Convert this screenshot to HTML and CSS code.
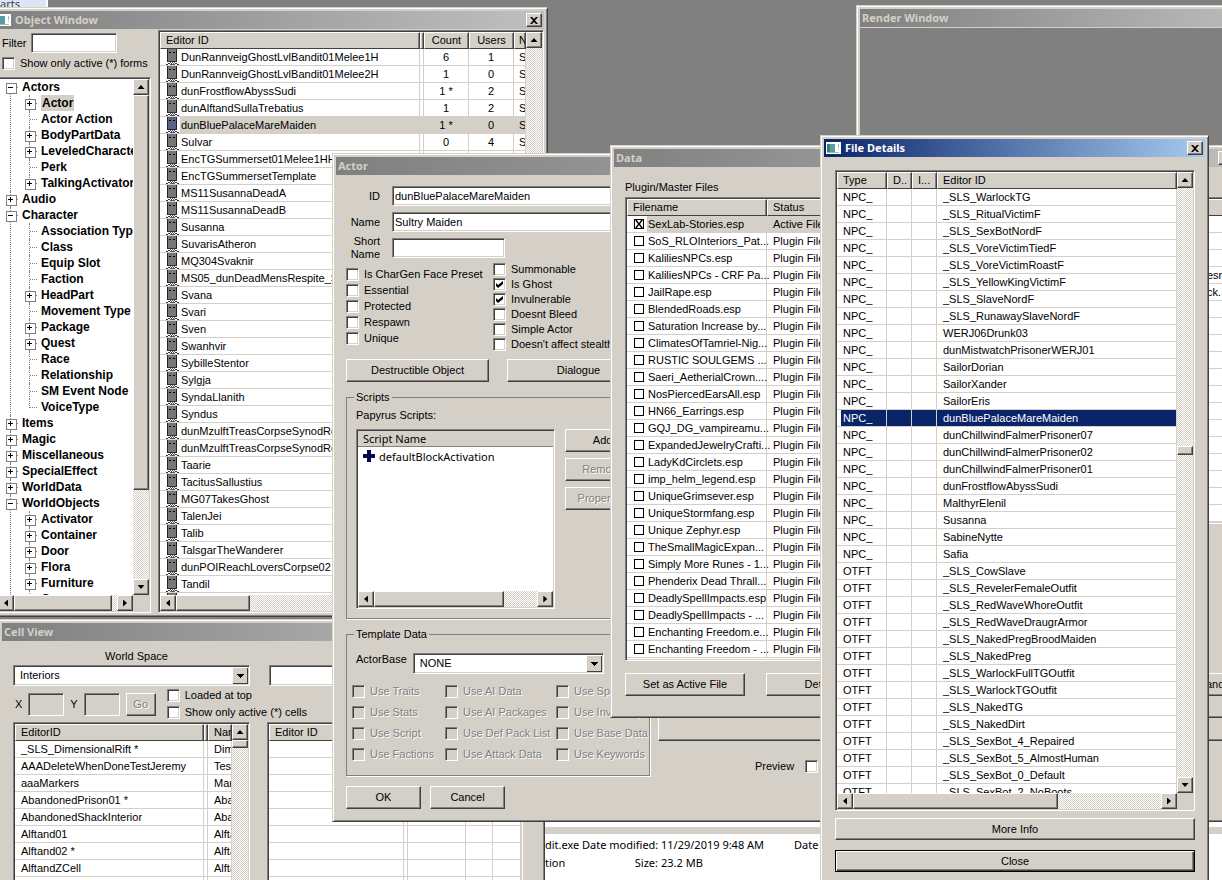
FILE: index.html
```html
<!DOCTYPE html>
<html lang="en">
<head>
    <meta charset="UTF-8">
    <meta name="viewport" content="width=device-width, initial-scale=1.0">
    <title>Creation Kit</title>
    <link rel="stylesheet" href="styles.css">
</head>
<body>
    <svg width="0" height="0" class="defs" aria-hidden="true">
        <symbol id="face" viewBox="0 0 14 16">
            <path d="M1 0h10v13H1z" fill="#777"/>
            <path d="M10 0h1v13h-1zM1 0h1v13H1z" fill="#222"/>
            <path d="M3 3h2v1H3zM7 3h2v1H7z" fill="#000"/>
            <path d="M2 12h9v1H2z" fill="#333"/>
            <path d="M0 15h2v1H0zM2 14h2v1H2zM9 14h2v1H9zM11 15h2v1h-2z" fill="#333"/>
            <path d="M4 13h1v1H4zM6 13h1v1H6zM8 13h1v1H8zM5 14h1v1H5zM7 14h1v1H7zM4 15h5v1H4z" fill="#555"/>
        </symbol>
        <symbol id="face-sel" viewBox="0 0 14 16">
            <path d="M1 0h10v13H1z" fill="#5a6480"/>
            <path d="M10 0h1v13h-1zM1 0h1v13H1z" fill="#1c2440"/>
            <path d="M3 3h2v1H3zM7 3h2v1H7z" fill="#000"/>
            <path d="M2 12h9v1H2z" fill="#223"/>
            <path d="M0 15h2v1H0zM2 14h2v1H2zM9 14h2v1H9zM11 15h2v1h-2z" fill="#334"/>
            <path d="M4 13h1v1H4zM6 13h1v1H6zM8 13h1v1H8zM5 14h1v1H5zM7 14h1v1H7zM4 15h5v1H4z" fill="#446"/>
        </symbol>
        <symbol id="app" viewBox="0 0 16 14">
            <path d="M0 1h15v12H0z" fill="#fff"/>
            <path d="M1 3h8v8H1z" fill="#5f9aa0"/>
            <path d="M1 3h3v8H1z" fill="#3d7d72"/>
            <path d="M12 3h1v4h-1zM12 8h1v1h-1zM1 11h12v1H1z" fill="#9bb"/>
        </symbol>
        <symbol id="cross" viewBox="0 0 8 7">
            <path d="M0 0h2l2 2 2-2h2L5 3.500 8 7H6L4 5 2 7H0l3-3.500z" fill="#000"/>
        </symbol>
    </svg>

    <main class="desktop">
        <div class="taskpane">arts</div>

        <!-- Explorer details pane -->
        <section class="explorer">
            <div class="explorer-bar"></div>
            <dl class="details">
                <dt class="file-name">dit.exe</dt>
                <dt>Date modified:</dt><dd>11/29/2019 9:48 AM</dd><dd>Date created:</dd>
                <dt class="file-kind">tion</dt>
                <dt>Size:</dt><dd>23.2 MB</dd>
            </dl>
        </section>

        <section class="window render-window">
            <header class="title"><h2>Render Window</h2></header>
            <div class="viewport"></div>
        </section>

        <section class="window object-window">
            <header class="title">
                <svg class="app-icon"><use href="#app"/></svg>
                <h2>Object Window</h2>
                <button class="tbtn" aria-label="Close"><svg><use href="#cross"/></svg></button>
            </header>
            <div class="object-body">
                <div class="object-side">
                    <div class="filter">
                        <div class="filter-row"><label for="filter">Filter</label><input type="text" id="filter" class="field"></div>
                        <label class="check"><input type="checkbox">Show only active (*) forms</label>
                    </div>
                    <div class="list tree-list">
                        <div class="list-view">
                            <ul class="tree">
                                <li class="open">Actors
                                    <ul>
                                        <li class="shut"><span class="picked">Actor</span></li>
                                        <li>Actor Action</li>
                                        <li class="shut">BodyPartData</li>
                                        <li class="shut">LeveledCharacter</li>
                                        <li>Perk</li>
                                        <li class="shut">TalkingActivator</li>
                                    </ul>
                                </li>
                                <li class="shut">Audio</li>
                                <li class="open">Character
                                    <ul>
                                        <li>Association Type</li>
                                        <li>Class</li>
                                        <li>Equip Slot</li>
                                        <li>Faction</li>
                                        <li class="shut">HeadPart</li>
                                        <li>Movement Type</li>
                                        <li class="shut">Package</li>
                                        <li class="shut">Quest</li>
                                        <li>Race</li>
                                        <li>Relationship</li>
                                        <li>SM Event Node</li>
                                        <li>VoiceType</li>
                                    </ul>
                                </li>
                                <li class="shut">Items</li>
                                <li class="shut">Magic</li>
                                <li class="shut">Miscellaneous</li>
                                <li class="shut">SpecialEffect</li>
                                <li class="shut">WorldData</li>
                                <li class="open">WorldObjects
                                    <ul>
                                        <li class="shut">Activator</li>
                                        <li class="shut">Container</li>
                                        <li class="shut">Door</li>
                                        <li class="shut">Flora</li>
                                        <li class="shut">Furniture</li>
                                        <li class="shut">Grass</li>
                                    </ul>
                                </li>
                            </ul>
                        </div>
                        <div class="vbar"><button class="arrow up" aria-label="Up"></button><div class="thumb tree-v"></div><button class="arrow down" aria-label="Down"></button></div>
                        <div class="hbar"><button class="arrow left" aria-label="Left"></button><div class="thumb tree-h"></div><button class="arrow right" aria-label="Right"></button></div>
                    </div>
                </div>
                <div class="list object-list">
                    <div class="list-view">
                        <table class="object-table">
                            <colgroup><col class="w-id"><col class="w-gap"><col class="w-num"><col class="w-num"><col></colgroup>
                            <thead><tr><th>Editor ID</th><th></th><th class="num">Count</th><th class="num">Users</th><th>Name</th></tr></thead>
                            <tbody>
                                <tr><td><svg><use href="#face"/></svg>DunRannveigGhostLvlBandit01Melee1H</td><td></td><td>6</td><td>1</td><td>S</td></tr>
                                <tr><td><svg><use href="#face"/></svg>DunRannveigGhostLvlBandit01Melee2H</td><td></td><td>1</td><td>0</td><td>S</td></tr>
                                <tr><td><svg><use href="#face"/></svg>dunFrostflowAbyssSudi</td><td></td><td>1 *</td><td>2</td><td>S</td></tr>
                                <tr><td><svg><use href="#face"/></svg>dunAlftandSullaTrebatius</td><td></td><td>1</td><td>2</td><td>S</td></tr>
                                <tr class="soft"><td><svg><use href="#face-sel"/></svg>dunBluePalaceMareMaiden</td><td></td><td>1 *</td><td>0</td><td>S</td></tr>
                                <tr><td><svg><use href="#face"/></svg>Sulvar</td><td></td><td>0</td><td>4</td><td>S</td></tr>
                                <tr><td><svg><use href="#face"/></svg>EncTGSummerset01Melee1HHighElfM</td><td></td><td></td><td></td><td></td></tr>
                                <tr><td><svg><use href="#face"/></svg>EncTGSummersetTemplate</td><td></td><td></td><td></td><td></td></tr>
                                <tr><td><svg><use href="#face"/></svg>MS11SusannaDeadA</td><td></td><td></td><td></td><td></td></tr>
                                <tr><td><svg><use href="#face"/></svg>MS11SusannaDeadB</td><td></td><td></td><td></td><td></td></tr>
                                <tr><td><svg><use href="#face"/></svg>Susanna</td><td></td><td></td><td></td><td></td></tr>
                                <tr><td><svg><use href="#face"/></svg>SuvarisAtheron</td><td></td><td></td><td></td><td></td></tr>
                                <tr><td><svg><use href="#face"/></svg>MQ304Svaknir</td><td></td><td></td><td></td><td></td></tr>
                                <tr><td><svg><use href="#face"/></svg>MS05_dunDeadMensRespite_Svaknir</td><td></td><td></td><td></td><td></td></tr>
                                <tr><td><svg><use href="#face"/></svg>Svana</td><td></td><td></td><td></td><td></td></tr>
                                <tr><td><svg><use href="#face"/></svg>Svari</td><td></td><td></td><td></td><td></td></tr>
                                <tr><td><svg><use href="#face"/></svg>Sven</td><td></td><td></td><td></td><td></td></tr>
                                <tr><td><svg><use href="#face"/></svg>Swanhvir</td><td></td><td></td><td></td><td></td></tr>
                                <tr><td><svg><use href="#face"/></svg>SybilleStentor</td><td></td><td></td><td></td><td></td></tr>
                                <tr><td><svg><use href="#face"/></svg>Sylgja</td><td></td><td></td><td></td><td></td></tr>
                                <tr><td><svg><use href="#face"/></svg>SyndaLlanith</td><td></td><td></td><td></td><td></td></tr>
                                <tr><td><svg><use href="#face"/></svg>Syndus</td><td></td><td></td><td></td><td></td></tr>
                                <tr><td><svg><use href="#face"/></svg>dunMzulftTreasCorpseSynodResearcher</td><td></td><td></td><td></td><td></td></tr>
                                <tr><td><svg><use href="#face"/></svg>dunMzulftTreasCorpseSynodResearcher</td><td></td><td></td><td></td><td></td></tr>
                                <tr><td><svg><use href="#face"/></svg>Taarie</td><td></td><td></td><td></td><td></td></tr>
                                <tr><td><svg><use href="#face"/></svg>TacitusSallustius</td><td></td><td></td><td></td><td></td></tr>
                                <tr><td><svg><use href="#face"/></svg>MG07TakesGhost</td><td></td><td></td><td></td><td></td></tr>
                                <tr><td><svg><use href="#face"/></svg>TalenJei</td><td></td><td></td><td></td><td></td></tr>
                                <tr><td><svg><use href="#face"/></svg>Talib</td><td></td><td></td><td></td><td></td></tr>
                                <tr><td><svg><use href="#face"/></svg>TalsgarTheWanderer</td><td></td><td></td><td></td><td></td></tr>
                                <tr><td><svg><use href="#face"/></svg>dunPOIReachLoversCorpse02</td><td></td><td></td><td></td><td></td></tr>
                                <tr><td><svg><use href="#face"/></svg>Tandil</td><td></td><td></td><td></td><td></td></tr>
                                <tr><td><svg><use href="#face"/></svg></td><td></td><td></td><td></td><td></td></tr>
                            </tbody>
                        </table>
                    </div>
                    <div class="vbar"><button class="arrow up" aria-label="Up"></button><span class="fill"></span><button class="arrow down" aria-label="Down"></button></div>
                    <div class="hbar"><button class="arrow left" aria-label="Left"></button><div class="thumb object-h"></div><button class="arrow right" aria-label="Right"></button></div>
                </div>
            </div>
        </section>

        <section class="window cell-window">
            <header class="title"><h2>Cell View</h2></header>
            <div class="cell-body">
                <div class="cell-left">
                    <label class="world-label" for="world">World Space</label>
                    <select id="world" class="combo"><option>Interiors</option></select>
                    <div class="coords">
                        <label for="cx">X</label><input type="text" id="cx" class="field" disabled>
                        <label for="cy">Y</label><input type="text" id="cy" class="field" disabled>
                        <button class="btn go" disabled>Go</button>
                        <div class="coord-checks">
                            <label class="check"><input type="checkbox">Loaded at top</label>
                            <label class="check"><input type="checkbox">Show only active (*) cells</label>
                        </div>
                    </div>
                    <div class="list cell-list">
                        <div class="list-view">
                            <table class="cell-table">
                                <colgroup><col class="w-cell"><col class="w-gap"><col></colgroup>
                                <thead><tr><th>EditorID</th><th></th><th>Name</th></tr></thead>
                                <tbody>
                                    <tr><td>_SLS_DimensionalRift *</td><td></td><td>Dim</td></tr>
                                    <tr><td>AAADeleteWhenDoneTestJeremy</td><td></td><td>Test</td></tr>
                                    <tr><td>aaaMarkers</td><td></td><td>Mark</td></tr>
                                    <tr><td>AbandonedPrison01 *</td><td></td><td>Aban</td></tr>
                                    <tr><td>AbandonedShackInterior</td><td></td><td>Aban</td></tr>
                                    <tr><td>Alftand01</td><td></td><td>Alftan</td></tr>
                                    <tr><td>Alftand02 *</td><td></td><td>Alftan</td></tr>
                                    <tr><td>AlftandZCell</td><td></td><td>Alftan</td></tr>
                                    <tr><td></td><td></td><td></td></tr>
                                </tbody>
                            </table>
                        </div>
                        <div class="vbar"><button class="arrow up" aria-label="Up"></button><div class="thumb small"></div></div>
                    </div>
                </div>
                <div class="cell-right">
                    <input type="text" class="field cell-filter" aria-label="Cell filter">
                    <div class="list ref-list">
                        <div class="list-view">
                            <table class="ref-table">
                                <colgroup><col class="w-ref"><col class="w-gap"><col class="w-form"><col class="w-type"><col></colgroup>
                                <thead><tr><th>Editor ID</th><th></th><th></th><th></th><th></th></tr></thead>
                                <tbody>
                                    <tr><td></td><td></td><td></td><td></td><td></td></tr>
                                    <tr><td></td><td></td><td></td><td></td><td></td></tr>
                                    <tr><td></td><td></td><td></td><td></td><td></td></tr>
                                    <tr><td></td><td></td><td></td><td></td><td></td></tr>
                                    <tr><td></td><td></td><td></td><td></td><td></td></tr>
                                    <tr><td></td><td></td><td></td><td></td><td></td></tr>
                                    <tr><td></td><td></td><td></td><td></td><td></td></tr>
                                    <tr><td></td><td></td><td></td><td></td><td></td></tr>
                                    <tr><td></td><td></td><td></td><td></td><td></td></tr>
                                </tbody>
                            </table>
                        </div>
                    </div>
                </div>
            </div>
        </section>

        <section class="window actor-window">
            <header class="title"><h2>Actor</h2></header>
            <div class="actor-body">
                <div class="actor-main">
                    <div class="names">
                        <label for="aid">ID</label><input type="text" id="aid" class="field" value="dunBluePalaceMareMaiden">
                        <label for="aname">Name</label><input type="text" id="aname" class="field" value="Sultry Maiden">
                        <label for="ashort">Short Name</label><input type="text" id="ashort" class="field short">
                    </div>
                    <div class="flags">
                        <div class="flags-left">
                            <label class="check"><input type="checkbox">Is CharGen Face Preset</label>
                            <label class="check"><input type="checkbox">Essential</label>
                            <label class="check"><input type="checkbox">Protected</label>
                            <label class="check"><input type="checkbox">Respawn</label>
                            <label class="check"><input type="checkbox">Unique</label>
                        </div>
                        <div class="flags-right">
                            <label class="check"><input type="checkbox">Summonable</label>
                            <label class="check"><input type="checkbox" checked>Is Ghost</label>
                            <label class="check"><input type="checkbox" checked>Invulnerable</label>
                            <label class="check"><input type="checkbox">Doesnt Bleed</label>
                            <label class="check"><input type="checkbox">Simple Actor</label>
                            <label class="check"><input type="checkbox">Doesn't affect stealth</label>
                        </div>
                    </div>
                    <div class="two-buttons">
                        <button class="btn">Destructible Object</button>
                        <button class="btn">Dialogue</button>
                    </div>
                    <fieldset class="scripts">
                        <legend>Scripts</legend>
                        <div class="caption">Papyrus Scripts:</div>
                        <div class="scripts-row">
                            <div class="list script-list">
                                <div class="list-view">
                                    <div class="script-head">Script Name</div>
                                    <div class="script-item"><svg viewBox="0 0 12 12"><path d="M4 0h4v4h4v4H8v4H4V8H0V4h4z" fill="#0a0a50"/></svg>defaultBlockActivation</div>
                                </div>
                                <div class="hbar"><button class="arrow left" aria-label="Left"></button><div class="thumb script-h"></div><button class="arrow right" aria-label="Right"></button></div>
                            </div>
                            <div class="script-buttons">
                                <button class="btn">Add</button>
                                <button class="btn" disabled>Remove</button>
                                <button class="btn" disabled>Properties</button>
                            </div>
                        </div>
                    </fieldset>
                    <fieldset class="template">
                        <legend>Template Data</legend>
                        <div class="base-row">
                            <label for="base">ActorBase</label>
                            <select id="base" class="combo"><option>NONE</option></select>
                            <button class="btn" aria-label="Edit"></button>
                        </div>
                        <div class="uses">
                            <label class="check off"><input type="checkbox" disabled>Use Traits</label>
                            <label class="check off"><input type="checkbox" disabled>Use AI Data</label>
                            <label class="check off"><input type="checkbox" disabled>Use Spell List</label>
                            <label class="check off"><input type="checkbox" disabled>Use Stats</label>
                            <label class="check off"><input type="checkbox" disabled>Use AI Packages</label>
                            <label class="check off"><input type="checkbox" disabled>Use Inventory</label>
                            <label class="check off"><input type="checkbox" disabled>Use Script</label>
                            <label class="check off"><input type="checkbox" disabled>Use Def Pack List</label>
                            <label class="check off"><input type="checkbox" disabled>Use Base Data</label>
                            <label class="check off"><input type="checkbox" disabled>Use Factions</label>
                            <label class="check off"><input type="checkbox" disabled>Use Attack Data</label>
                            <label class="check off"><input type="checkbox" disabled>Use Keywords</label>
                        </div>
                    </fieldset>
                    <div class="ok-row">
                        <button class="btn">OK</button>
                        <button class="btn">Cancel</button>
                    </div>
                </div>
                <div class="actor-side">
                    <div class="tab-panel"></div>
                    <div class="preview"><label for="preview">Preview</label><input type="checkbox" id="preview"></div>
                </div>
            </div>
        </section>

        <section class="window data-window">
            <header class="title">
                <h2>Data</h2>
                <button class="tbtn" aria-label="Minimize"><span class="min"></span></button>
                <button class="tbtn" aria-label="Maximize"></button>
                <button class="tbtn" aria-label="Close"></button>
            </header>
            <div class="data-body">
                <div class="caption">Plugin/Master Files</div>
                <div class="data-lists">
                    <div class="list file-list">
                        <div class="list-view">
                            <table class="file-table">
                                <colgroup><col class="w-file"><col></colgroup>
                                <thead><tr><th>Filename</th><th>Status</th></tr></thead>
                                <tbody>
                                    <tr class="soft"><td><label><input type="checkbox" checked>SexLab-Stories.esp</label></td><td>Active File</td></tr>
                                    <tr><td><label><input type="checkbox">SoS_RLOInteriors_Pat...</label></td><td>Plugin File</td></tr>
                                    <tr><td><label><input type="checkbox">KaliliesNPCs.esp</label></td><td>Plugin File</td></tr>
                                    <tr><td><label><input type="checkbox">KaliliesNPCs - CRF Pa...</label></td><td>Plugin File</td></tr>
                                    <tr><td><label><input type="checkbox">JailRape.esp</label></td><td>Plugin File</td></tr>
                                    <tr><td><label><input type="checkbox">BlendedRoads.esp</label></td><td>Plugin File</td></tr>
                                    <tr><td><label><input type="checkbox">Saturation Increase by...</label></td><td>Plugin File</td></tr>
                                    <tr><td><label><input type="checkbox">ClimatesOfTamriel-Nig...</label></td><td>Plugin File</td></tr>
                                    <tr><td><label><input type="checkbox">RUSTIC SOULGEMS ...</label></td><td>Plugin File</td></tr>
                                    <tr><td><label><input type="checkbox">Saeri_AetherialCrown....</label></td><td>Plugin File</td></tr>
                                    <tr><td><label><input type="checkbox">NosPiercedEarsAll.esp</label></td><td>Plugin File</td></tr>
                                    <tr><td><label><input type="checkbox">HN66_Earrings.esp</label></td><td>Plugin File</td></tr>
                                    <tr><td><label><input type="checkbox">GQJ_DG_vampireamu...</label></td><td>Plugin File</td></tr>
                                    <tr><td><label><input type="checkbox">ExpandedJewelryCrafti...</label></td><td>Plugin File</td></tr>
                                    <tr><td><label><input type="checkbox">LadyKdCirclets.esp</label></td><td>Plugin File</td></tr>
                                    <tr><td><label><input type="checkbox">imp_helm_legend.esp</label></td><td>Plugin File</td></tr>
                                    <tr><td><label><input type="checkbox">UniqueGrimsever.esp</label></td><td>Plugin File</td></tr>
                                    <tr><td><label><input type="checkbox">UniqueStormfang.esp</label></td><td>Plugin File</td></tr>
                                    <tr><td><label><input type="checkbox">Unique Zephyr.esp</label></td><td>Plugin File</td></tr>
                                    <tr><td><label><input type="checkbox">TheSmallMagicExpan...</label></td><td>Plugin File</td></tr>
                                    <tr><td><label><input type="checkbox">Simply More Runes - 1...</label></td><td>Plugin File</td></tr>
                                    <tr><td><label><input type="checkbox">Phenderix Dead Thrall...</label></td><td>Plugin File</td></tr>
                                    <tr><td><label><input type="checkbox">DeadlySpellImpacts.esp</label></td><td>Plugin File</td></tr>
                                    <tr><td><label><input type="checkbox">DeadlySpellImpacts - ...</label></td><td>Plugin File</td></tr>
                                    <tr><td><label><input type="checkbox">Enchanting Freedom.e...</label></td><td>Plugin File</td></tr>
                                    <tr><td><label><input type="checkbox">Enchanting Freedom - ...</label></td><td>Plugin File</td></tr>
                                </tbody>
                            </table>
                        </div>
                    </div>
                    <div class="list info-list">
                        <div class="list-view">
                            <table class="info-table">
                                <colgroup><col class="w-info"><col></colgroup>
                                <thead><tr><th></th><th></th></tr></thead>
                                <tbody>
                                    <tr><td></td><td></td></tr><tr><td></td><td></td></tr><tr><td></td><td></td></tr>
                                    <tr><td></td><td>esn't</td></tr><tr><td></td><td>ck.</td></tr>
                                    <tr><td></td><td></td></tr><tr><td></td><td></td></tr><tr><td></td><td></td></tr>
                                    <tr><td></td><td></td></tr><tr><td></td><td></td></tr><tr><td></td><td></td></tr>
                                    <tr><td></td><td></td></tr><tr><td></td><td></td></tr><tr><td></td><td></td></tr>
                                    <tr><td></td><td></td></tr><tr><td></td><td></td></tr><tr><td></td><td></td></tr>
                                    <tr><td></td><td></td></tr>
                                </tbody>
                            </table>
                        </div>
                    </div>
                </div>
                <div class="data-buttons">
                    <button class="btn">Set as Active File</button>
                    <button class="btn">Details...</button>
                    <button class="btn last">and</button>
                </div>
            </div>
        </section>

        <section class="window details-window">
            <header class="title active">
                <svg class="app-icon"><use href="#app"/></svg>
                <h2>File Details</h2>
                <button class="tbtn" aria-label="Close"><svg><use href="#cross"/></svg></button>
            </header>
            <div class="details-body">
                <div class="list form-list">
                    <div class="list-view">
                        <table class="form-table">
                            <colgroup><col class="w-kind"><col class="w-mark"><col class="w-mark"><col></colgroup>
                            <thead><tr><th>Type</th><th>D..</th><th>I...</th><th>Editor ID</th></tr></thead>
                            <tbody>
                                <tr><td>NPC_</td><td></td><td></td><td>_SLS_WarlockTG</td></tr>
                                <tr><td>NPC_</td><td></td><td></td><td>_SLS_RitualVictimF</td></tr>
                                <tr><td>NPC_</td><td></td><td></td><td>_SLS_SexBotNordF</td></tr>
                                <tr><td>NPC_</td><td></td><td></td><td>_SLS_VoreVictimTiedF</td></tr>
                                <tr><td>NPC_</td><td></td><td></td><td>_SLS_VoreVictimRoastF</td></tr>
                                <tr><td>NPC_</td><td></td><td></td><td>_SLS_YellowKingVictimF</td></tr>
                                <tr><td>NPC_</td><td></td><td></td><td>_SLS_SlaveNordF</td></tr>
                                <tr><td>NPC_</td><td></td><td></td><td>_SLS_RunawaySlaveNordF</td></tr>
                                <tr><td>NPC_</td><td></td><td></td><td>WERJ06Drunk03</td></tr>
                                <tr><td>NPC_</td><td></td><td></td><td>dunMistwatchPrisonerWERJ01</td></tr>
                                <tr><td>NPC_</td><td></td><td></td><td>SailorDorian</td></tr>
                                <tr><td>NPC_</td><td></td><td></td><td>SailorXander</td></tr>
                                <tr><td>NPC_</td><td></td><td></td><td>SailorEris</td></tr>
                                <tr class="hot"><td>NPC_</td><td></td><td></td><td>dunBluePalaceMareMaiden</td></tr>
                                <tr><td>NPC_</td><td></td><td></td><td>dunChillwindFalmerPrisoner07</td></tr>
                                <tr><td>NPC_</td><td></td><td></td><td>dunChillwindFalmerPrisoner02</td></tr>
                                <tr><td>NPC_</td><td></td><td></td><td>dunChillwindFalmerPrisoner01</td></tr>
                                <tr><td>NPC_</td><td></td><td></td><td>dunFrostflowAbyssSudi</td></tr>
                                <tr><td>NPC_</td><td></td><td></td><td>MalthyrElenil</td></tr>
                                <tr><td>NPC_</td><td></td><td></td><td>Susanna</td></tr>
                                <tr><td>NPC_</td><td></td><td></td><td>SabineNytte</td></tr>
                                <tr><td>NPC_</td><td></td><td></td><td>Safia</td></tr>
                                <tr><td>OTFT</td><td></td><td></td><td>_SLS_CowSlave</td></tr>
                                <tr><td>OTFT</td><td></td><td></td><td>_SLS_RevelerFemaleOutfit</td></tr>
                                <tr><td>OTFT</td><td></td><td></td><td>_SLS_RedWaveWhoreOutfit</td></tr>
                                <tr><td>OTFT</td><td></td><td></td><td>_SLS_RedWaveDraugrArmor</td></tr>
                                <tr><td>OTFT</td><td></td><td></td><td>_SLS_NakedPregBroodMaiden</td></tr>
                                <tr><td>OTFT</td><td></td><td></td><td>_SLS_NakedPreg</td></tr>
                                <tr><td>OTFT</td><td></td><td></td><td>_SLS_WarlockFullTGOutfit</td></tr>
                                <tr><td>OTFT</td><td></td><td></td><td>_SLS_WarlockTGOutfit</td></tr>
                                <tr><td>OTFT</td><td></td><td></td><td>_SLS_NakedTG</td></tr>
                                <tr><td>OTFT</td><td></td><td></td><td>_SLS_NakedDirt</td></tr>
                                <tr><td>OTFT</td><td></td><td></td><td>_SLS_SexBot_4_Repaired</td></tr>
                                <tr><td>OTFT</td><td></td><td></td><td>_SLS_SexBot_5_AlmostHuman</td></tr>
                                <tr><td>OTFT</td><td></td><td></td><td>_SLS_SexBot_0_Default</td></tr>
                                <tr><td>OTFT</td><td></td><td></td><td>_SLS_SexBot_2_NoBoots</td></tr>
                            </tbody>
                        </table>
                    </div>
                    <div class="vbar"><button class="arrow up" aria-label="Up"></button><div class="thumb form-v"></div><button class="arrow down" aria-label="Down"></button></div>
                    <div class="hbar"><button class="arrow left" aria-label="Left"></button><div class="thumb form-h"></div><button class="arrow right" aria-label="Right"></button></div>
                </div>
                <button class="btn">More Info</button>
                <button class="btn default">Close</button>
            </div>
        </section>
    </main>
</body>
</html>
```

FILE: styles.css
```css
* {
    box-sizing: border-box;
}
body {
    margin: 0;
    background: #808080;
    font-family: "Liberation Sans", Arial, sans-serif;
    font-size: 11px;
    line-height: 13px;
    color: #000;
}
button, input, select {
    font: inherit;
    color: inherit;
    margin: 0;
    border-radius: 0;
}
.defs {
    position: absolute;
}
.desktop {
    position: relative;
    height: 100vh;
    overflow: hidden;
    background: #808080;
}
.taskpane {
    width: 48px;
    height: 7px;
    overflow: hidden;
    background: #dce6f4;
    border-right: 2px solid #fff;
    font-family: "Noto Sans", sans-serif;
    line-height: 8px;
    color: #345;
}

/* windows */
.window {
    position: absolute;
    display: flex;
    flex-direction: column;
    padding: 3px;
    background: #d4d0c8;
    border: 1px solid;
    border-color: #d4d0c8 #404040 #404040 #d4d0c8;
    box-shadow: inset 1px 1px #fff, inset -1px -1px #808080;
}
.title {
    display: flex;
    flex: none;
    align-items: center;
    height: 18px;
    padding: 0 2px;
    background: linear-gradient(to right, #808080, #c0c0c0);
    color: #d4d0c8;
}
.title.active {
    background: linear-gradient(to right, #0a246a, #a6caf0);
    color: #fff;
}
.title h2 {
    flex: 1;
    margin: 0;
    font-family: "Noto Sans", Tahoma, sans-serif;
    font-size: 11px;
    line-height: 18px;
    font-weight: bold;
}
.app-icon {
    width: 16px;
    height: 14px;
    margin-right: 3px;
}
.tbtn {
    display: flex;
    align-items: center;
    justify-content: center;
    width: 16px;
    height: 14px;
    padding: 0;
    background: #d4d0c8;
    border: 1px solid;
    border-color: #fff #404040 #404040 #fff;
    box-shadow: inset -1px -1px #808080;
}
.tbtn svg {
    width: 8px;
    height: 7px;
}
.min {
    width: 6px;
    height: 2px;
    margin: 6px 2px 0 0;
    background: #000;
}

/* controls */
.btn {
    height: 23px;
    padding: 0;
    background: #d4d0c8;
    border: 1px solid;
    border-color: #fff #404040 #404040 #fff;
    box-shadow: inset -1px -1px #808080;
    text-align: center;
    white-space: nowrap;
}
.btn:disabled, .check.off {
    color: #808080;
    text-shadow: 1px 1px #fff;
}
.btn.default {
    border-color: #000;
    box-shadow: inset 1px 1px #fff, inset -1px -1px #404040, inset -2px -2px #808080;
}
.field, .combo {
    height: 20px;
    padding: 0 4px;
    background: #fff;
    border: 1px solid;
    border-color: #808080 #fff #fff #808080;
    box-shadow: inset 1px 1px #404040, inset -1px -1px #d4d0c8;
    outline: none;
}
.field:disabled {
    background: #d4d0c8;
}
.combo {
    appearance: none;
    height: 21px;
    padding: 0 6px;
    background-color: #fff;
    background-image:
        linear-gradient(to right, #000, #000),
        linear-gradient(to right, #000, #000),
        linear-gradient(to right, #000, #000),
        linear-gradient(to right, #000, #000),
        linear-gradient(to right, #fff, #fff),
        linear-gradient(to right, #fff, #fff),
        linear-gradient(to right, #404040, #404040),
        linear-gradient(to right, #404040, #404040),
        linear-gradient(to right, #d4d0c8, #d4d0c8);
    background-size: 7px 1px, 5px 1px, 3px 1px, 1px 1px, 16px 1px, 1px 17px, 16px 1px, 1px 17px, 16px 17px;
    background-position: right 5px top 8px, right 6px top 9px, right 7px top 10px, right 8px top 11px, right 1px top 1px, right 16px top 1px, right 1px bottom 1px, right 1px top 1px, right 1px top 1px;
    background-repeat: no-repeat;
}
.check {
    display: flex;
    align-items: center;
    gap: 5px;
    white-space: nowrap;
}
input[type="checkbox"] {
    appearance: none;
    flex: none;
    width: 13px;
    height: 13px;
    background: #fff;
    border: 1px solid;
    border-color: #808080 #fff #fff #808080;
    box-shadow: inset 1px 1px #404040, inset -1px -1px #d4d0c8;
}
input[type="checkbox"]:disabled {
    background: #d4d0c8;
}
input[type="checkbox"]:checked::before {
    content: "";
    display: block;
    width: 7px;
    height: 7px;
    margin: 2px;
    background: #000;
    clip-path: polygon(0 2px, 2px 4px, 7px 0, 7px 3px, 2px 7px, 0 5px);
}
fieldset {
    min-width: 0;
    margin: 0;
    padding: 0;
    border: 1px solid #808080;
    box-shadow: 1px 1px #fff;
}
legend {
    margin-left: 7px;
    padding: 0 2px;
}

/* list views */
.list {
    display: grid;
    grid-template-columns: minmax(0, 1fr) auto;
    grid-template-rows: minmax(0, 1fr) auto;
    border: 1px solid;
    border-color: #808080 #fff #fff #808080;
    padding: 1px;
    box-shadow: inset 1px 1px #404040;
    background: #d4d0c8;
}
.list-view {
    overflow: hidden;
    background: #fff;
}
table {
    width: 100%;
    table-layout: fixed;
    border-spacing: 0;
}
th, td {
    height: 17px;
    padding: 0 5px;
    text-align: left;
    font-weight: normal;
    white-space: nowrap;
    overflow: hidden;
}
th {
    background: #d4d0c8;
    border: 1px solid;
    border-color: #fff #404040 #404040 #fff;
    box-shadow: inset -1px 0 #808080;
}
td {
    padding: 0 0 0 6px;
    border-right: 1px solid #d4d0c8;
    border-bottom: 1px solid #d4d0c8;
}
th:empty, td:empty {
    padding: 0;
}
.w-gap {
    width: 4px;
}
.soft td {
    background: #d4d0c8;
}
.soft td:first-child {
    background: linear-gradient(#fff, #fff) 0 0 / 20px 100% no-repeat, #d4d0c8;
}
.hot td {
    background: #0a246a;
    color: #fff;
}
.hot td:first-child {
    box-shadow: inset 4px 0 #fff;
}
.vbar, .hbar {
    display: flex;
    justify-content: space-between;
    background: conic-gradient(#fff 25%, #d4d0c8 0 50%, #fff 0 75%, #d4d0c8 0) 0 0 / 2px 2px;
}
.vbar {
    grid-row: 1;
    grid-column: 2;
    flex-direction: column;
    width: 16px;
}
.hbar {
    grid-row: 2;
    grid-column: 1;
    height: 16px;
}
.thumb, .arrow {
    background: #d4d0c8;
    border: 1px solid;
    border-color: #fff #404040 #404040 #fff;
    box-shadow: inset -1px -1px #808080;
}
.arrow {
    display: flex;
    flex: none;
    align-items: center;
    justify-content: center;
    width: 16px;
    height: 16px;
    padding: 0;
}
.arrow::before {
    content: "";
    width: 7px;
    height: 4px;
    background: #000;
    clip-path: polygon(50% 0, 100% 100%, 0 100%);
}
.arrow.down::before {
    clip-path: polygon(0 0, 100% 0, 50% 100%);
}
.arrow.left::before, .arrow.right::before {
    width: 4px;
    height: 7px;
    clip-path: polygon(100% 0, 100% 100%, 0 50%);
}
.arrow.right::before {
    clip-path: polygon(0 0, 100% 50%, 0 100%);
}

/* explorer */
.explorer {
    position: absolute;
    left: 545px;
    right: 0;
    bottom: 0;
    height: 60px;
    background: #fff;
    font-family: "Noto Sans", Tahoma, sans-serif;
}
.explorer-bar {
    height: 7px;
    margin-top: 7px;
    background: #d4d0c8;
}
.details {
    display: grid;
    grid-template-columns: 34px 76px 130px auto;
    column-gap: 3px;
    row-gap: 2px;
    margin: 3px 0;
    line-height: 16px;
    white-space: nowrap;
}
.details dt {
    text-align: right;
}
.details dd {
    margin: 0;
}
.details .file-name, .details .file-kind {
    text-align: left;
}

/* render window */
.render-window {
    left: 856px;
    right: -60px;
    top: 5px;
    height: 300px;
}
.viewport {
    flex: 1;
    background: #808080;
    border-top: 1px solid #d4d0c8;
}

/* object window */
.object-window {
    left: -8px;
    top: 7px;
    width: 556px;
    height: 610px;
}
.object-window .title {
    padding-left: 0;
}
.object-body {
    display: flex;
    flex: 1;
    min-height: 0;
    gap: 7px;
}
.object-side {
    display: flex;
    flex-direction: column;
    width: 155px;
}
.filter {
    display: flex;
    flex-direction: column;
    gap: 4px;
    height: 48px;
    padding: 4px 0 0 6px;
}
.filter-row {
    display: flex;
    align-items: center;
    gap: 5px;
}
.filter .field {
    width: 86px;
}
.tree-list {
    flex: 1;
    min-height: 0;
}
.tree, .tree ul {
    margin: 0;
    padding: 0;
    list-style: none;
}
.tree {
    font-size: 12px;
    font-weight: bold;
    line-height: 16px;
    white-space: nowrap;
}
.tree li {
    position: relative;
    padding-left: 24px;
}
.tree ul li {
    padding-left: 19px;
}
/* dotted connectors */
.tree li::after {
    content: "";
    position: absolute;
    left: 12px;
    top: 0;
    width: 8px;
    height: 100%;
    border-left: 1px dotted #808080;
    background: linear-gradient(to right, #808080 50%, transparent 0) 0 8px / 2px 1px repeat-x;
}
.tree > li:first-child::after {
    top: 8px;
    height: calc(100% - 8px);
    background-position: 0 0;
}
.tree ul li::after {
    left: 7px;
}
.tree ul li:last-child::after {
    height: 9px;
}
.tree .open::before, .tree .shut::before {
    content: "";
    position: absolute;
    z-index: 1;
    left: 8px;
    top: 4px;
    width: 9px;
    height: 9px;
    border: 1px solid #808080;
    background:
        linear-gradient(#000, #000) 1px 3px / 5px 1px no-repeat,
        linear-gradient(#000, #000) 3px 1px / 1px 5px no-repeat,
        #fff;
}
.tree .open::before {
    background: linear-gradient(#000, #000) 1px 3px / 5px 1px no-repeat, #fff;
}
.tree ul .shut::before {
    left: 3px;
}
.picked {
    padding: 1px;
    background: #d4d0c8;
}
.tree-v {
    height: 395px;
    margin-bottom: auto;
}
.tree-h {
    width: 98px;
    margin-right: auto;
}
.object-list {
    flex: 1;
    margin-top: 1px;
    min-height: 0;
}
.w-id {
    width: 260px;
}
.w-num {
    width: 45px;
}
.object-table td {
    line-height: 16px;
}
.object-table td svg {
    width: 14px;
    height: 16px;
    margin-right: 1px;
    vertical-align: top;
}
.object-table td:nth-child(3), .object-table td:nth-child(4) {
    padding: 0;
    text-align: center;
}
.object-table .num {
    text-align: center;
}
.object-table td:last-child {
    padding-left: 5px;
}
.object-table th:last-child {
    padding-left: 4px;
}
.object-h {
    width: 74px;
    margin-right: auto;
}

/* cell view */
.cell-window {
    left: -2px;
    top: 619px;
    width: 547px;
    height: 300px;
}
.cell-body {
    display: flex;
    flex: 1;
    gap: 17px;
    padding: 0 18px 0 11px;
}
.cell-left {
    display: flex;
    flex-direction: column;
    width: 237px;
}
.world-label {
    padding: 9px 12px 2px 22px;
    text-align: center;
}
.coords {
    display: flex;
    align-items: center;
    gap: 6px;
    height: 36px;
    padding-left: 2px;
    white-space: nowrap;
}
.coords .field {
    flex: none;
    width: 36px;
    height: 23px;
}
.coords > label {
    width: 8px;
}
.go {
    flex: none;
    width: 30px;
}
.coord-checks {
    display: flex;
    flex-direction: column;
    gap: 4px;
    margin-left: 5px;
}
.cell-list, .ref-list {
    flex: 1;
}
.w-cell {
    width: 189px;
}
.small {
    height: 8px;
    margin-bottom: auto;
}
.cell-right {
    display: flex;
    flex: 1;
    flex-direction: column;
}
.cell-filter {
    height: 21px;
    margin: 24px 0 36px 2px;
}
.w-ref {
    width: 135px;
}
.w-form {
    width: 58px;
}
.w-type {
    width: 27px;
}

/* actor */
.actor-window {
    left: 332px;
    right: -60px;
    top: 153px;
}
.actor-body {
    display: flex;
    gap: 8px;
    padding: 11px 10px 9px;
}
.actor-main {
    display: flex;
    flex-direction: column;
    width: 304px;
}
.names {
    display: grid;
    grid-template-columns: 34px 1fr;
    grid-auto-rows: 20px;
    gap: 6px 12px;
    align-items: center;
    text-align: right;
}
.names .field {
    padding: 0 2px;
}
.names .short {
    width: 113px;
}
.flags {
    display: flex;
    padding: 4px 0 7px;
}
.flags-left {
    width: 147px;
    padding-top: 4px;
}
.flags-left .check {
    height: 16px;
}
.flags-right .check {
    height: 15px;
}
.two-buttons {
    display: flex;
    gap: 18px;
}
.two-buttons .btn {
    flex: 1;
}
.scripts, .template {
    margin-top: 9px;
}
.scripts {
    padding: 5px 9px 9px;
}
.scripts legend {
    margin-left: -2px;
}
.scripts-row {
    display: flex;
    gap: 10px;
    margin-top: 7px;
}
.script-list {
    width: 200px;
    height: 180px;
    font-family: "Noto Sans", Tahoma, sans-serif;
}
.script-head {
    height: 16px;
    padding-left: 5px;
    line-height: 16px;
    background: #d4d0c8;
    border-bottom: 1px solid #808080;
}
.script-item {
    display: flex;
    align-items: center;
    gap: 4px;
    height: 18px;
    padding-left: 5px;
}
.script-item svg {
    width: 12px;
    height: 12px;
}
.script-h {
    width: 130px;
    margin-right: auto;
}
.script-buttons {
    display: flex;
    flex-direction: column;
    gap: 6px;
    width: 75px;
}
.template {
    padding: 12px 5px 10px;
}
.template legend {
    margin-left: 2px;
}
.base-row {
    display: flex;
    gap: 6px;
    padding-left: 4px;
}
.base-row .combo {
    width: 191px;
}
.base-row .btn {
    flex: 1;
    height: 21px;
}
.uses {
    display: grid;
    grid-template-columns: 93px 111px 1fr;
    grid-auto-rows: 21px;
    padding-top: 7px;
}
.ok-row {
    display: flex;
    gap: 9px;
    margin-top: 10px;
}
.ok-row .btn {
    width: 75px;
}
.actor-side {
    display: flex;
    flex: 1;
    flex-direction: column;
}
.tab-panel {
    flex: 1;
    border: 1px solid;
    border-color: #fff #404040 #404040 #fff;
    box-shadow: inset -1px -1px #808080;
}
.preview {
    display: flex;
    gap: 11px;
    height: 68px;
    padding: 19px 0 0 97px;
}

/* data */
.data-window {
    left: 610px;
    right: -50px;
    top: 145px;
}
.data-body {
    padding: 14px 11px 18px;
}
.data-lists {
    display: flex;
    gap: 10px;
    align-items: flex-start;
    margin-top: 3px;
}
.file-list {
    width: 261px;
    height: 464px;
}
.info-list {
    flex: 1;
    height: 327px;
}
.w-file {
    width: 140px;
}
.w-info {
    width: 303px;
}
.file-table td:first-child {
    overflow: visible;
}
.file-table td label {
    display: flex;
    align-items: center;
    gap: 4px;
}
.file-table input[type="checkbox"] {
    width: 10px;
    height: 10px;
    margin-left: 1px;
    border: 1px solid #000;
    box-shadow: none;
}
.file-table input[type="checkbox"]:checked::before {
    width: 8px;
    height: 8px;
    margin: 0;
    clip-path: polygon(0 0, 2px 0, 4px 3px, 6px 0, 8px 0, 5px 4px, 8px 8px, 6px 8px, 4px 5px, 2px 8px, 0 8px, 3px 4px);
}
.data-buttons {
    display: flex;
    gap: 21px;
    margin-top: 12px;
}
.data-buttons .btn {
    width: 120px;
}
.data-buttons .last {
    width: 72px;
    margin-left: auto;
    padding-left: 20px;
    text-align: left;
}

/* file details */
.details-window {
    left: 820px;
    top: 135px;
    width: 389px;
    height: 760px;
}
.details-body {
    display: flex;
    flex-direction: column;
    padding: 13px 10px 0 11px;
}
.form-list {
    height: 641px;
    margin-bottom: 7px;
}
.details-body .btn {
    height: 22px;
    margin-bottom: 10px;
}
.w-kind {
    width: 50px;
}
.w-mark {
    width: 25px;
}
.form-v {
    height: 9px;
    margin-top: 258px;
    margin-bottom: auto;
}
.form-h {
    width: 205px;
    margin-right: auto;
}
```
